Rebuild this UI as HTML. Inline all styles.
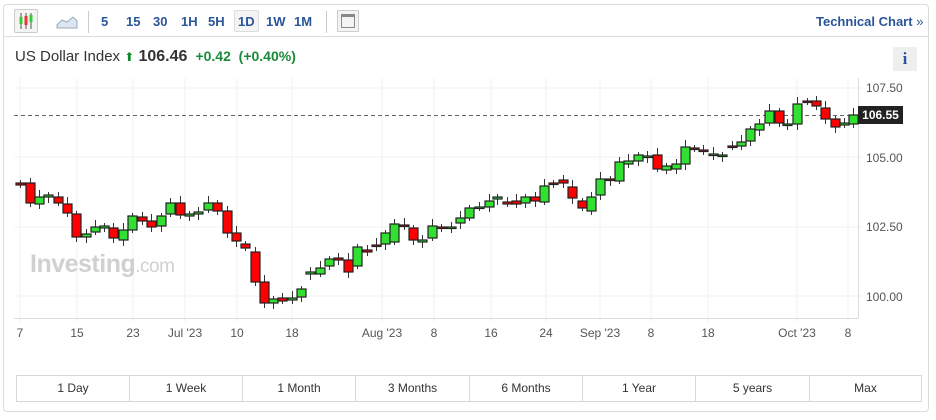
<!DOCTYPE html>
<html><head><meta charset="utf-8"><style>
*{box-sizing:border-box;margin:0;padding:0}
body{width:936px;height:420px;background:#fff;font-family:"Liberation Sans",Arial,sans-serif;position:relative;overflow:hidden}
.box{position:absolute;left:3px;top:4px;width:926px;height:408px;border:1px solid #dcdcdc;border-radius:4px}
.tb{position:absolute;left:0;top:0;width:924px;height:32px;border-bottom:1px solid #dcdcdc}
.t{position:absolute;top:9px;font-size:13px;font-weight:bold;color:#2a5598}
.ttl{position:absolute;left:15px;top:48px;font-size:15px;color:#333}
.ax{position:absolute;font-size:12px;color:#555}
.rb{position:absolute;top:375px;height:27px;border:1px solid #d6d6d6;font-size:12px;color:#333;text-align:center;line-height:25px;background:#fff}
</style></head><body>
<div class="box">
 <div class="tb">
  <div style="position:absolute;left:10px;top:4px;width:24px;height:24px;border:1px solid #ccc;border-radius:2px;background:#f4f4f4"></div>
  <svg style="position:absolute;left:10px;top:4px" width="24" height="24"><path d="M7 4v16M12 4v16M17 4v16" stroke="#555"/><rect x="5.5" y="8" width="3" height="7" fill="#3c3"/><rect x="10.5" y="7" width="3" height="9" fill="#e33"/><rect x="15.5" y="6" width="3" height="7" fill="#3c3"/></svg>
  <svg style="position:absolute;left:52px;top:8px" width="22" height="16"><path d="M1 12L6 7 11 9 17 4 21 8V15H1Z" fill="#dbe6f2" stroke="#9ab"/></svg>
  <div style="position:absolute;left:84px;top:6px;width:1px;height:22px;background:#ccc"></div>
  <span class="t" style="left:97px">5</span><span class="t" style="left:122px">15</span><span class="t" style="left:149px">30</span><span class="t" style="left:177px">1H</span><span class="t" style="left:204px">5H</span>
  <div style="position:absolute;left:230px;top:5px;width:25px;height:22px;border:1px solid #ddd;background:#f4f4f4;border-radius:2px"></div>
  <span class="t" style="left:234px">1D</span><span class="t" style="left:262px">1W</span><span class="t" style="left:290px">1M</span>
  <div style="position:absolute;left:322px;top:6px;width:1px;height:22px;background:#ccc"></div>
  <div style="position:absolute;left:333px;top:5px;width:22px;height:22px;border:1px solid #ccc;background:#f4f4f4"><div style="margin:3px;width:14px;height:14px;border:1px solid #888;border-top-width:3px"></div></div>
  <span class="t" style="left:812px">Technical Chart <span style="font-weight:normal">»</span></span>
 </div>
</div>
<div class="ttl">US Dollar Index <span style="color:#0a8a2a;font-size:12px">&#11014;</span> <b style="font-size:16px">106.46</b> <span style="color:#1a8a3a;font-weight:bold;font-size:14px">&nbsp;+0.42 &nbsp;(+0.40%)</span></div>
<div style="position:absolute;left:893px;top:47px;width:24px;height:24px;background:#eee;color:#2a5598;font:bold 17px 'Liberation Serif',serif;text-align:center;line-height:24px">i</div>
<svg id="c" style="position:absolute;left:0;top:0" width="936" height="420"></svg>
<div class="ax" style="left:866px;top:81px">107.50</div>
<div class="ax" style="left:866px;top:151px">105.00</div>
<div class="ax" style="left:866px;top:220px">102.50</div>
<div class="ax" style="left:866px;top:290px">100.00</div>
<div style="position:absolute;left:858px;top:106px;width:45px;height:18px;background:#222;color:#fff;font-size:12px;font-weight:bold;line-height:18px;text-align:center">106.55</div>
<div id="xl"></div>
<div class="rb" style="left:16px;width:114px">1 Day</div><div class="rb" style="left:129px;width:114px">1 Week</div><div class="rb" style="left:242px;width:114px">1 Month</div><div class="rb" style="left:355px;width:115px">3 Months</div><div class="rb" style="left:469px;width:114px">6 Months</div><div class="rb" style="left:582px;width:114px">1 Year</div><div class="rb" style="left:695px;width:115px">5 years</div><div class="rb" style="left:809px;width:113px">Max</div>
<div style="position:absolute;left:30px;top:250px;font-size:25px;font-weight:bold;color:#d0d0d0;letter-spacing:-0.5px">Investing<span style="font-weight:normal;font-size:19px">.com</span></div>
<script>
var xs=[[20,'7'],[77,'15'],[133,'23'],[185,"Jul '23"],[237,'10'],[292,'18'],[382,"Aug '23"],[434,'8'],[491,'16'],[546,'24'],[600,"Sep '23"],[651,'8'],[708,'18'],[797,"Oct '23"],[848,'8']];
var s='';
[88,157,227,296].forEach(function(y){s+='<line x1="14" x2="862" y1="'+y+'" y2="'+y+'" stroke="#f0f0f0"/>';});
var h='';
xs.forEach(function(a){s+='<line x1="'+a[0]+'" x2="'+a[0]+'" y1="78" y2="322" stroke="#f0f0f0"/>';
h+='<div class="ax" style="top:326px;left:'+(a[0]-30)+'px;width:60px;text-align:center">'+a[1]+'</div>';});
s+='<line x1="858.5" x2="858.5" y1="78" y2="318" stroke="#ddd"/><line x1="14" x2="858" y1="318.5" y2="318.5" stroke="#ddd"/>';
s+='<line x1="14" x2="858" y1="115.5" y2="115.5" stroke="#666" stroke-dasharray="4,3"/>';
var c=[[20,'r',183,185],[30,'r',183,203],[39,'g',197,204],[48,'g',195,197],[58,'r',197,203],[67,'r',204,213],[76,'r',214,237],[86,'g',234,237],[95,'g',227,232],[104,'g',226,228],[113,'r',228,238],[123,'g',230,240],[132,'g',216,230],[142,'r',217,221],[151,'r',221,227],[161,'g',216,226],[170,'g',203,214],[180,'r',203,215],[189,'g',214,216],[198,'g',212,214],[208,'g',203,210],[217,'r',203,211],[227,'r',211,233],[236,'r',233,241],[245,'r',244,248],[255,'r',252,282],[264,'r',282,303],[273,'g',299,303],[282,'r',298,301],[292,'g',298,300],[301,'g',289,297],[310,'g',272,274],[320,'g',268,274],[329,'g',259,266],[338,'r',258,260],[348,'r',260,272],[357,'g',247,266],[367,'r',250,252],[376,'r',245,246],[385,'g',233,244],[394,'g',224,242],[404,'r',225,226],[413,'r',228,240],[422,'g',240,242],[432,'g',226,238],[441,'r',227,228],[451,'g',227,228],[460,'g',218,223],[469,'g',208,218],[479,'g',207,207],[489,'g',201,207],[497,'g',197,199],[507,'r',202,204],[516,'r',201,204],[525,'g',197,203],[535,'r',197,201],[544,'g',186,202],[553,'r',183,184],[563,'r',180,183],[572,'r',187,198],[582,'r',201,208],[591,'g',197,211],[600,'g',179,195],[610,'r',179,180],[619,'g',162,181],[628,'g',161,164],[638,'g',155,161],[647,'g',156,157],[657,'r',155,169],[666,'g',166,170],[676,'g',164,169],[685,'g',147,164],[694,'r',148,149],[703,'r',150,151],[713,'g',154,155],[722,'g',155,156],[732,'r',146,147],[741,'g',142,146],[750,'g',129,141],[759,'g',124,130],[769,'g',111,123],[779,'r',111,123],[787,'g',124,125],[797,'g',104,124],[807,'r',101,102],[816,'r',101,106],[825,'r',108,119],[835,'r',119,127],[844,'g',123,125],[853,'g',115,124]];
c.forEach(function(d,i){var x=d[0],t=d[2],b=d[3];var w1=t-3-(i%3)*2,w2=b+3+(i%4);
s+='<line x1="'+(x+.5)+'" x2="'+(x+.5)+'" y1="'+w1+'" y2="'+w2+'" stroke="#333"/>';
s+='<rect x="'+(x-4)+'" y="'+t+'" width="9" height="'+Math.max(b-t,1.5)+'" fill="'+(d[1]=='g'?'#32e032':'#f00')+'" stroke="#222" stroke-width="1.2"/>';});
document.getElementById('c').innerHTML=s;document.getElementById('xl').innerHTML=h;
</script>
</body></html>
